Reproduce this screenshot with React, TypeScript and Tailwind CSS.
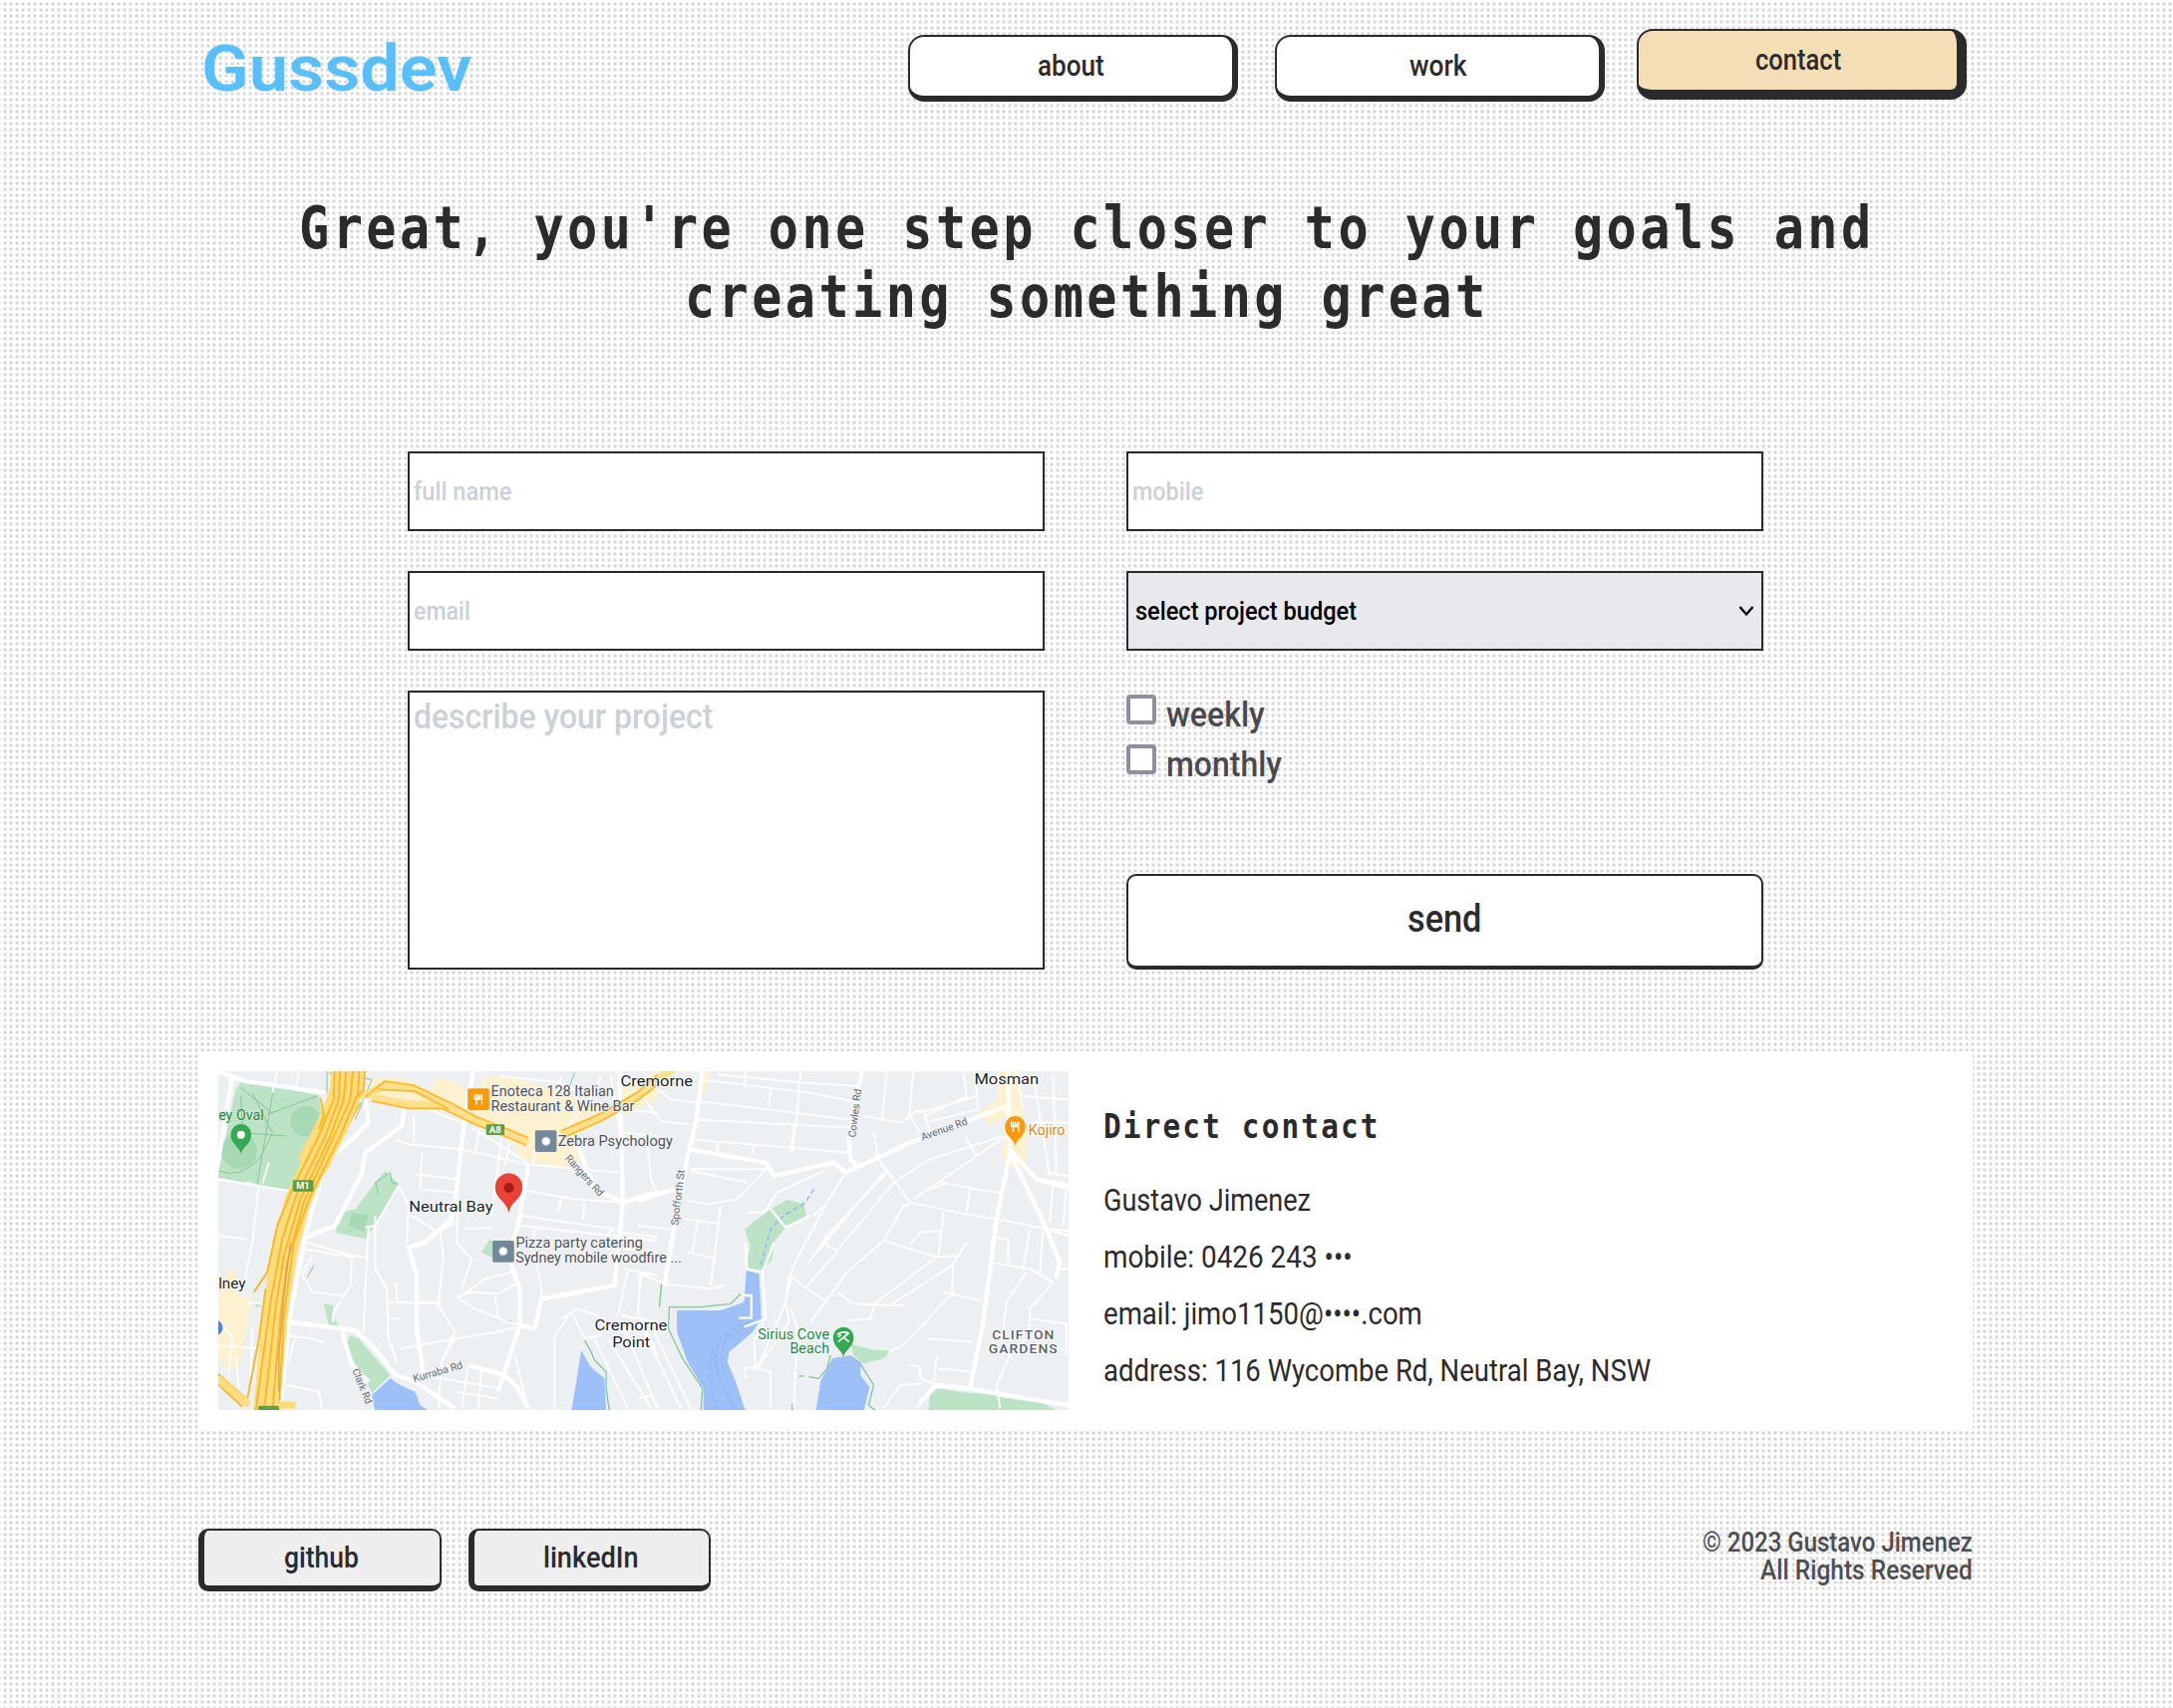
import { useLayoutEffect, useRef, useState, type ReactNode } from "react";

/** Single line of text condensed horizontally so that it fills its container's width. */
function Fit({ className = "", children }: { className?: string; children: ReactNode }) {
  const box = useRef<HTMLSpanElement>(null);
  const text = useRef<HTMLSpanElement>(null);
  const [scale, setScale] = useState(1);
  useLayoutEffect(() => {
    if (box.current && text.current) {
      setScale(box.current.clientWidth / text.current.offsetWidth);
    }
  }, []);
  return (
    <span ref={box} className={`block shrink-0 whitespace-nowrap ${className}`}>
      <span ref={text} className="inline-block origin-left" style={{ transform: `scaleX(${scale})` }}>
        {children}
      </span>
    </span>
  );
}

const thinRoads = [
  // north-west blocks
  "M25 370L240 405M110 380L150 390L130 560L100 710M25 540L115 550M160 385L180 320",
  "M205 45L190 110M270 45L262 90M290 560L430 600L470 605M285 580L430 605L425 690L375 770L372 800",
  "M280 660L310 710L400 720M310 600L280 660L300 690M240 840L310 850L345 860M235 990L330 1010L340 1060M260 840L240 920",
  "M500 480L500 640L535 700L540 850L565 920M480 510L470 700L465 830M570 390L600 450L595 560M570 390L500 510L470 515",
  "M540 740L690 745M555 685L565 685L565 735M540 790L575 790M620 740L700 740M695 530L705 600L690 750L740 830L700 920",
  "M560 250L600 265L760 280L960 325L1230 350M615 180L615 260M640 150L760 200M640 290L635 400M625 355L750 370M635 400L745 410",
  "M640 460L730 470M610 480L690 530L740 500M750 420L745 560L790 610L760 700M790 215L960 320M880 250L850 480M905 260L890 330M820 200L800 290",
  "M930 400L1100 430L1240 440M960 330L940 480L1220 520M1060 430L1050 470M1130 440L1125 490M940 510L1210 540L1350 555M1220 520L1190 540M980 510L975 560",
  "M850 515L770 520M750 730L830 670L910 650M750 730L800 760L900 800L930 810M745 725L790 710L870 715L925 685M860 720L870 790M980 590L1000 700M980 600L960 560M1000 700L1000 740",
  "M575 880L740 850L870 830L930 815M740 850L700 920L690 1060M640 960L760 980L870 1000M780 930L760 1060M820 940L810 1060M920 900L960 1060M740 1010L870 1030",
  "M1060 790L1110 760L1190 790M1040 1060L1040 840L1090 770L1130 850L1180 840M1160 850L1260 1060M1200 850L1330 1060M1240 800L1350 1060M1260 650L1230 780M1300 650L1290 770L1350 900M1240 780L1350 800",
  "M1210 60L1240 250M1060 60L1040 130M880 60L1060 80L1130 120M1230 60L1350 80M1240 160L1350 170M1240 230L1350 240M980 280L975 330M1180 60L1150 120L1050 250",
  "M25 870L140 880M25 800L70 840L60 950M110 740L155 745M130 820L125 960M80 900L90 1000",
  "M1250 640L1350 660M1250 580L1350 590M1240 530L1350 545",
];

const eastRoads = [
  "M185 70L520 110L670 140M180 135L640 190M170 190L640 215M165 250L630 290M150 205L70 195L20 130M240 255L240 290M350 265L345 295M470 210L460 290",
  "M490 45L480 170L465 290M325 45L320 95M240 55L500 80L670 90M400 100L395 150M60 100L100 130L180 140",
  "M750 45L735 195M830 45L815 190M680 180L790 200L840 165L860 165L880 230M980 45L990 120L865 180M1015 45L1025 165M1110 240L1020 300L830 430M850 170L1020 120M820 180L850 230M865 200L1020 160",
  "M710 230L725 310L820 440M725 310L750 350L570 540L570 570L600 585L770 380L880 310L1100 240M985 240L1020 300",
  "M820 445L800 450L740 555L630 650L520 800M740 555L900 605L970 600M820 440L960 470L1080 490L1230 520L1296 525M910 380L1090 412M1000 400L990 470M880 400L930 380",
  "M920 470L905 600L720 740M820 565L850 530L920 525M990 560L945 630L760 750M950 620L945 715L800 870L755 890M600 710L650 745L800 750M715 740L700 790L630 795",
  "M455 660L570 740M455 660L445 740L360 940M445 740L455 800L360 940M380 800L350 860L355 940L400 950L400 1060M620 360L570 440L500 570L465 640L450 720",
  "M570 540L510 630M600 590L510 690M740 350L540 590M1060 620L1180 640L1250 680M1170 650L1110 740L1095 860M1250 680L1180 760L1180 840M1180 790L1290 805L1290 900M920 710L1030 735M870 850L1010 860",
  "M900 900L890 990L840 1060M905 940L1000 950M1180 520L1160 640M1220 525L1210 650M1075 545L1115 550L1115 620M1230 520L1296 540M1090 1060L1080 990L1120 900L1180 840M1270 640L1296 640M1270 880L1296 885",
  "M820 930L850 935L850 970L890 985M740 1060L790 990L860 985M1230 350L1296 360M1225 370L1296 385M1290 390L1280 510M1250 380L1240 500M1140 45L1160 160M1190 60L1240 360M1250 60L1260 350M1160 120L1296 130M1180 200L1296 200",
  "M160 340L390 340M160 345L330 380M390 335L300 430L210 445L150 435M140 490L250 505M250 450L220 690M180 490L165 590M150 590L240 610M0 650L80 685L220 700L260 690M0 510L100 520M30 270L40 370L55 405M330 470L380 470L420 410L560 345M560 450L530 480",
  "M470 1060L480 820L460 760M320 940L360 935M320 940L325 970M0 1030L50 1020M20 830L130 1060M50 830L160 1060",
];

const mainRoads = [
  "M25 45L110 75L350 110M70 60L25 330M470 130L480 200L440 240L350 320L290 540L240 800L215 1060",
  "M590 150L580 210L470 290L460 350L380 510L290 545M795 45L770 180L745 400L730 490L650 560L600 575L625 660L625 820L645 960",
  "M960 330L930 510L900 600L935 700L935 810L870 1010M935 810L980 820L1000 730L1220 690L1245 440L1240 230L1235 45M1245 440L1350 410",
  "M240 800L440 825L500 880L560 960L620 980L740 1060M400 830L430 930L480 980M780 930L890 960L930 1000L960 1060M1110 270L1160 400L1245 440",
];

const eastMain = [
  "M195 45L175 200L150 300L95 600L80 690M155 280L385 320L410 360L590 320L625 350L820 260L1110 150",
  "M675 45L635 250L640 310L660 330M1115 45L1120 290L1080 490L1040 800L1000 1000M1120 280L1200 370L1296 395M0 435L110 400",
  "M1000 1000L900 990L850 1040M1000 1000L1100 1020L1296 1050M1125 300L1230 520L1270 620L1260 670",
];

function Pin({ x, y, fill }: { x: number; y: number; fill: string }) {
  return (
    <path
      transform={`translate(${x} ${y})`}
      fill={fill}
      d="M0 32C-4 10-31 4-31-27A31 31 0 0 1 31-27C31 4 4 10 0 32Z"
    />
  );
}

function Fork({ x, y }: { x: number; y: number }) {
  return (
    <g transform={`translate(${x} ${y})`} fill="none" stroke="#fff" strokeWidth="4">
      <path d="M-12-15V-5Q-12 0-6 0Q0 0 0-5V-15M-6-15V16M10 16V-14Q3-10 3 0H10" />
    </g>
  );
}

/** Map label stretched to an exact length. */
function Label({ x = 0, y = 0, w, children }: { x?: number; y?: number; w: number; children: ReactNode }) {
  return (
    <text x={x} y={y} textLength={w} lengthAdjust="spacingAndGlyphs">
      {children}
    </text>
  );
}

function MapView() {
  return (
    <svg viewBox="0 0 853 340" className="h-[340px] w-[853px] shrink-0" fontFamily="Roboto, sans-serif" fontWeight="400">
      <rect width="853" height="340" fill="#edf0f3" />
      {/* western terrain and roads */}
      <g transform="translate(-9.2 -15) scale(.33333)" fill="none" strokeLinejoin="round">
        {/* commercial areas */}
        <path
          fill="#fdf1d0"
          d="M480 70L540 62L600 70L660 100L690 65L760 85L790 180L640 140L480 120ZM830 60H900L1130 130L1240 165L1090 250L1120 310L1080 340L940 310L920 270L790 180ZM30 720L60 640L90 660L85 720L130 730L90 940L40 940L25 850ZM1240 100L1350 45V130L1250 180Z"
        />
        {/* parks */}
        <path fill="#bce3c6" d="M100 72L330 118L338 180L300 300L240 405L25 365L80 100ZM500 380L530 345L570 385L500 505L470 550L380 530L395 470L440 460ZM345 745L375 750L370 780L390 810L360 810ZM425 840L450 850L545 960L490 1015L470 970L430 910L415 860ZM845 550L870 570L850 605L820 590ZM130 735L160 750L140 755Z" />
        <circle cx="290" cy="195" r="46" fill="#a8d9b5" />
        <circle cx="90" cy="285" r="54" fill="#a8d9b5" />
        <path fill="#a8d9b5" d="M430 470L480 480L465 530L420 510Z" />
        <path stroke="#83c796" strokeWidth="3" d="M95 95L190 170M195 90L145 385M325 120L175 175M95 120L100 210M100 230L230 240M130 110L190 230M30 345Q90 370 150 310L190 235M510 415L500 380L545 350L550 380L570 385M355 45V110M360 50L490 70L440 190M315 630L295 665M900 795L925 810M1100 50L1085 90" />
        {/* water */}
        <path fill="#9dc0f9" d="M490 1020L545 970L575 990L620 1010L635 1050L665 1070H500ZM1120 885L1145 930L1160 945L1190 970L1195 1070H1090L1105 980Z" />
        <path stroke="#83c796" strokeWidth="4" d="M1130 855L1150 890L1160 915L1195 950L1195 1000L1205 1070" />
        <g stroke="#fff" strokeWidth="5.5">
          {thinRoads.map((d) => (
            <path key={d} d={d} />
          ))}
        </g>
        <g stroke="#fff" strokeWidth="13">
          {mainRoads.map((d) => (
            <path key={d} d={d} />
          ))}
        </g>
        {/* motorway */}
        <path stroke="#ffe08a" strokeWidth="24" d="M420 115H480L530 85L610 95L720 150L800 195L900 230L960 255M490 125L600 145L720 150M1060 235L1180 185L1290 120L1350 70L1400 35M440 140L400 230L350 290" />
        <path stroke="#fbb72b" strokeWidth="5" d="M470 122L530 75L615 88L730 142L800 180L960 245M490 135L600 157L700 157L800 205L900 245L955 268M510 100L620 105L720 158M1065 245L1180 195L1290 132L1350 85M1060 224L1180 172L1290 108L1350 55M455 140L410 225L355 285" />
        <path stroke="#ffdc7c" strokeWidth="95" d="M418 30L410 110L375 200L310 330" />
        <path stroke="#ffdc7c" strokeWidth="78" d="M350 250L265 440L225 600L200 760L172 1075" />
        <path stroke="#fbb72b" strokeWidth="6" d="M378 40L375 130L330 240L250 400L205 510L175 650L135 710M395 40L390 130L350 240L262 420L220 550L185 740L140 1070M413 40L405 130L365 240L275 430L225 600L200 760L165 1070M433 40L425 130L380 230L285 440L235 620L215 780L190 1070M452 40L448 110L395 240L305 420L255 560L225 780L210 1070M468 45L465 100L440 130M335 125L345 180L330 220M170 700L150 850L115 1030M25 955L110 1030M25 985L100 1055" />
        <path stroke="#c7a566" strokeWidth="4" d="M245 560L225 720L210 900L210 1010" />
        <path stroke="#ffdc7c" strokeWidth="22" d="M25 970L120 1050M200 1050H260" />
      </g>
      {/* eastern terrain and roads */}
      <g transform="translate(420.8 -15) scale(.33333)" fill="none" strokeLinejoin="round">
        <path fill="#fdf1d0" d="M1085 45H1150L1165 200L1175 300L1150 345L1095 310L1110 180L1060 210L1030 165L1085 130ZM195 45H215L205 110H190ZM620 895L670 905V925L625 915Z" />
        <path fill="#bce3c6" d="M322 520L400 460L450 432L500 445L508 480L445 515L410 560L405 610L370 655L327 640L338 570ZM640 865L710 885L760 885L740 910L680 925L650 900ZM875 1070L880 1010L900 1000L980 1012L1090 1020L1200 1035L1270 1070Z" />
        <path fill="#9dc0f9" d="M327 645L365 655L372 790L345 830L300 870L275 890L270 920L295 980L325 1070H198V1000L150 920L118 830L118 765L250 765L320 740ZM585 910L640 900L672 920L670 960L698 995L680 1070H536L550 980Z" />
        <path stroke="#8db2f4" strokeWidth="4" strokeDasharray="16 9" d="M340 800L290 820L250 850L232 900L240 960L290 1062M330 815L265 850L250 900L260 960M225 880L215 960L235 1062M530 400L505 440L440 480L400 520L370 630" />
        <path stroke="#83c796" strokeWidth="4" d="M72 680L65 755M310 715L280 745L190 755L95 755L92 820L135 910L195 1000L190 1070M580 900L570 940L545 970L515 965M500 963H485M670 925L710 990L695 1050L720 1070M465 1045V1070" />
        <g stroke="#fff" strokeWidth="5.5">
          {eastRoads.map((d) => (
            <path key={d} d={d} />
          ))}
          <path strokeWidth="7" d="M315 720H342V788H305M375 640L385 790L320 815M400 460L445 515L520 480M325 560L328 640L375 650M410 560L380 640" />
        </g>
        <g stroke="#fff" strokeWidth="13">
          {eastMain.map((d) => (
            <path key={d} d={d} />
          ))}
        </g>
      </g>
      {/* western markers and labels */}
      <g transform="translate(-9.2 -15) scale(.33333)" fill="none">
        <g fill="#5f9f45">
          <rect x="252" y="373" width="62" height="34" rx="3" />
          <rect x="834" y="205" width="55" height="32" rx="3" />
          <rect x="148" y="1052" width="62" height="20" rx="3" />
        </g>
        <g fill="#fff" fontSize="27" fontWeight="700">
          <Label x={262} y={399} w={40}>M1</Label>
          <Label x={843} y={230} w={36}>A8</Label>
        </g>
        <circle cx="17" cy="817" r="24" fill="#4285f4" />
        <circle cx="12" cy="817" r="14" fill="#fff" />
        <Pin x={96} y={262} fill="#34a853" />
        <circle cx="96" cy="236" r="12" fill="#fff" />
        <rect x="778" y="97" width="65" height="65" rx="5" fill="#f79a0c" />
        <Fork x={811} y={130} />
        <g fill="#71899a">
          <rect x="981" y="223" width="65" height="65" rx="5" />
          <rect x="853" y="555" width="65" height="65" rx="5" />
        </g>
        <g fill="#fff" stroke="#c9d5dc" strokeWidth="3">
          <circle cx="1014" cy="256" r="12" />
          <circle cx="885" cy="587" r="12" />
        </g>
        <path fill="#ea4335" stroke="#c5372b" strokeWidth="2" d="M902 468C896 436 862 430 862 393A40 40 0 0 1 942 393C942 430 908 436 902 468Z" />
        <circle cx="902" cy="396" r="15" fill="#a11a14" />
        <g stroke="#f4f6f8" strokeWidth="5" paintOrder="stroke" fill="#505357" fontSize="42">
          <Label x={848} y={121} w={370}>Enoteca 128 Italian</Label>
          <Label x={848} y={165} w={432}>Restaurant &amp; Wine Bar</Label>
          <Label x={1050} y={269} w={345}>Zebra Psychology</Label>
          <Label x={923} y={576} w={382}>Pizza party catering</Label>
          <Label x={922} y={621} w={500}>Sydney mobile woodfire ...</Label>
        </g>
        <g stroke="#fff" strokeWidth="5" paintOrder="stroke" fill="#202226" fontSize="46">
          <Label x={601} y={469} w={253}>Neutral Bay</Label>
          <Label x={28} y={698} w={82}>lney</Label>
          <Label x={1238} y={90} w={218}>Cremorne</Label>
          <Label x={1160} y={826} w={219}>Cremorne</Label>
          <Label x={1213} y={876} w={114}>Point</Label>
        </g>
        <g fontSize="42" fill="#22874a" stroke="#d8efde" strokeWidth="4" paintOrder="stroke">
          <Label x={28} y={192} w={137}>ey Oval</Label>
        </g>
        <g stroke="#eef1f4" strokeWidth="5" paintOrder="stroke" fill="#6b6d71" fontSize="31">
          <g transform="translate(1070 308) rotate(48)"><Label w={155}>Rangers Rd</Label></g>
          <g transform="translate(617 981) rotate(-16)"><Label w={154}>Kurraba Rd</Label></g>
          <g transform="translate(430 945) rotate(68)"><Label w={112}>Clark Rd</Label></g>
        </g>
      </g>
      {/* eastern markers and labels */}
      <g transform="translate(420.8 -15) scale(.33333)" fill="none">
        <Pin x={1136} y={238} fill="#f79a0c" />
        <Fork x={1136} y={212} />
        <Pin x={619} y={873} fill="#34a853" />
        <path stroke="#fff" strokeWidth="5" d="M600 838Q615 826 636 834M603 860L634 834M618 845L636 860M603 846L612 838" />
        <g stroke="#fff" strokeWidth="5" paintOrder="stroke">
          <g fontSize="44" fill="#202226">
            <Label x={1013} y={83} w={194}>Mosman</Label>
          </g>
          <g fill="#22874a" fontSize="42">
            <Label x={361} y={851} w={216}>Sirius Cove</Label>
            <Label x={458} y={895} w={119}>Beach</Label>
          </g>
          <g fill="#e58709" fontSize="42">
            <Label x={1176} y={237} w={110}>Kojiro</Label>
          </g>
          <g fill="#5d6064" fontSize="38" fontWeight="500" letterSpacing="3">
            <Label x={1066} y={853} w={190}>CLIFTON</Label>
            <Label x={1056} y={894} w={210}>GARDENS</Label>
          </g>
        </g>
        <g stroke="#eef1f4" strokeWidth="5" paintOrder="stroke" fill="#6b6d71" fontSize="31">
          <g transform="translate(121 510) rotate(-83)"><Label w={168}>Spofforth St</Label></g>
          <g transform="translate(655 245) rotate(-83)"><Label w={147}>Cowles Rd</Label></g>
          <g transform="translate(857 254) rotate(-20)"><Label w={146}>Avenue Rd</Label></g>
        </g>
      </g>
    </svg>
  );
}

const field = "flex h-[80px] items-center border-2 border-[#2a2a2d] bg-white pl-[4px] text-[26px] text-[#ccd1d5]";
const navButton = "flex w-[331px] items-center justify-center rounded-[16px] border-t-2 border-l-2 border-[#2b2b2e] pb-[2px] text-[30px]";
const footerButton = "flex h-[63px] items-center justify-center rounded-[10px] border-t-2 border-r-2 border-b-6 border-l-6 border-[#2b2b2e] bg-[#eee] pr-[2px] pb-[2px] text-[30px]";

export default function App() {
  return (
    <div className="h-[1714px] w-[2180px] overflow-hidden bg-[#fdfdfd] bg-[radial-gradient(circle_at_center,#d2d2d2_0.6px,transparent_2.3px)] bg-[length:6px_6px] bg-[position:2px_1px] pl-[199px] font-['Roboto',sans-serif] font-medium text-[#2b2b2e]">
      <header className="flex h-[102px] w-[1774px] items-start">
        <div className="mt-[37px] ml-[3px] text-[64px] leading-[66px] font-semibold text-[#58bffa]">
          <Fit className="w-[271px]">Gussdev</Fit>
        </div>
        <nav className="ml-auto flex items-start">
          <a className={`${navButton} mt-[35px] h-[67px] border-r-6 border-b-6 bg-white`}>
            <Fit className="w-[67px]">about</Fit>
          </a>
          <a className={`${navButton} mt-[35px] ml-[37px] h-[67px] border-r-6 border-b-6 bg-white`}>
            <Fit className="w-[58px]">work</Fit>
          </a>
          <a className={`${navButton} mt-[29px] ml-[32px] h-[71px] border-r-10 border-b-10 bg-[#f5deb5]`}>
            <Fit className="w-[86px]">contact</Fit>
          </a>
        </nav>
      </header>

      <h1 className="mt-[92px] flex w-[1783px] flex-col items-center font-['DejaVu_Sans_Mono',monospace] text-[59px] leading-[69px] font-bold tracking-[4px]">
        <Fit className="w-[1581px]">Great, you're one step closer to your goals and</Fit>
        <Fit className="w-[807px]">creating something great</Fit>
      </h1>

      <form className="mt-[121px] ml-[210px] grid grid-cols-[639px_639px] grid-rows-[80px_80px_280px] gap-x-[82px] gap-y-[40px]">
        <div className={field}>
          <Fit className="w-[98px]">full name</Fit>
        </div>
        <div className={field}>
          <Fit className="w-[71px]">mobile</Fit>
        </div>
        <div className={field}>
          <Fit className="w-[57px]">email</Fit>
        </div>
        <div className="flex items-center justify-between border-2 border-[#2a2a2d] bg-[#e9e9ed] pr-[7px] pl-[7px] text-[26px] text-black">
          <Fit className="w-[222px]">select project budget</Fit>
          <svg viewBox="0 0 16 12" className="h-[12px] w-[16px]" fill="none" stroke="#000" strokeWidth="2.4">
            <path d="M1.5 2L8 9.5L14.5 2" />
          </svg>
        </div>
        <div className="border-2 border-[#2a2a2d] bg-white pl-[4px] text-[35px] leading-[50px] text-[#ccd1d5]">
          <Fit className="w-[300px]">describe your project</Fit>
        </div>
        <div className="flex flex-col justify-between">
          <div className="flex flex-col pt-[4px] text-[35px] leading-[50px] text-[#4a4a4e]">
            <label className="flex h-[50px] items-start gap-[10px]">
              <span className="h-[30px] w-[30px] rounded-[4px] border-4 border-[#8f8f9d] bg-white" />
              <Fit className="-mt-[4px] w-[99px]">weekly</Fit>
            </label>
            <label className="flex h-[50px] items-start gap-[10px]">
              <span className="h-[30px] w-[30px] rounded-[4px] border-4 border-[#8f8f9d] bg-white" />
              <Fit className="-mt-[4px] w-[116px]">monthly</Fit>
            </label>
          </div>
          <button type="button" className="flex h-[96px] items-center justify-center rounded-[10px] border-2 border-b-4 border-[#2a2a2d] bg-white pr-[1px] pb-[3px] text-[38px] font-medium">
            <Fit className="w-[74px]">send</Fit>
          </button>
        </div>
      </form>

      <section className="mt-[82px] flex h-[381px] w-[1780px] bg-white pt-[20px] pl-[20px]">
        <MapView />
        <div className="ml-[35px] text-[32px] leading-[57px] font-normal">
          <h2 className="mt-[30px] font-['DejaVu_Sans_Mono',monospace] text-[34px] leading-[50px] font-bold tracking-[2.5px]">
            <Fit className="w-[278px]">Direct contact</Fit>
          </h2>
          <div className="mt-[21px] flex flex-col">
            <Fit className="w-[208px]">Gustavo Jimenez</Fit>
            <Fit className="w-[250px]">mobile: 0426 243 •••</Fit>
            <Fit className="w-[320px]">email: jimo1150@••••.com</Fit>
            <Fit className="w-[549px]">address: 116 Wycombe Rd, Neutral Bay, NSW</Fit>
          </div>
        </div>
      </section>

      <footer className="mt-[98px] flex w-[1780px] items-start">
        <a className={`${footerButton} w-[244px]`}>
          <Fit className="w-[75px]">github</Fit>
        </a>
        <a className={`${footerButton} ml-[27px] w-[243px]`}>
          <Fit className="w-[96px]">linkedIn</Fit>
        </a>
        <div className="ml-auto flex flex-col items-end text-[27px] leading-[28px] text-[#4d4d52]">
          <Fit className="w-[271px]">© 2023 Gustavo Jimenez</Fit>
          <Fit className="w-[213px]">All Rights Reserved</Fit>
        </div>
      </footer>
    </div>
  );
}
